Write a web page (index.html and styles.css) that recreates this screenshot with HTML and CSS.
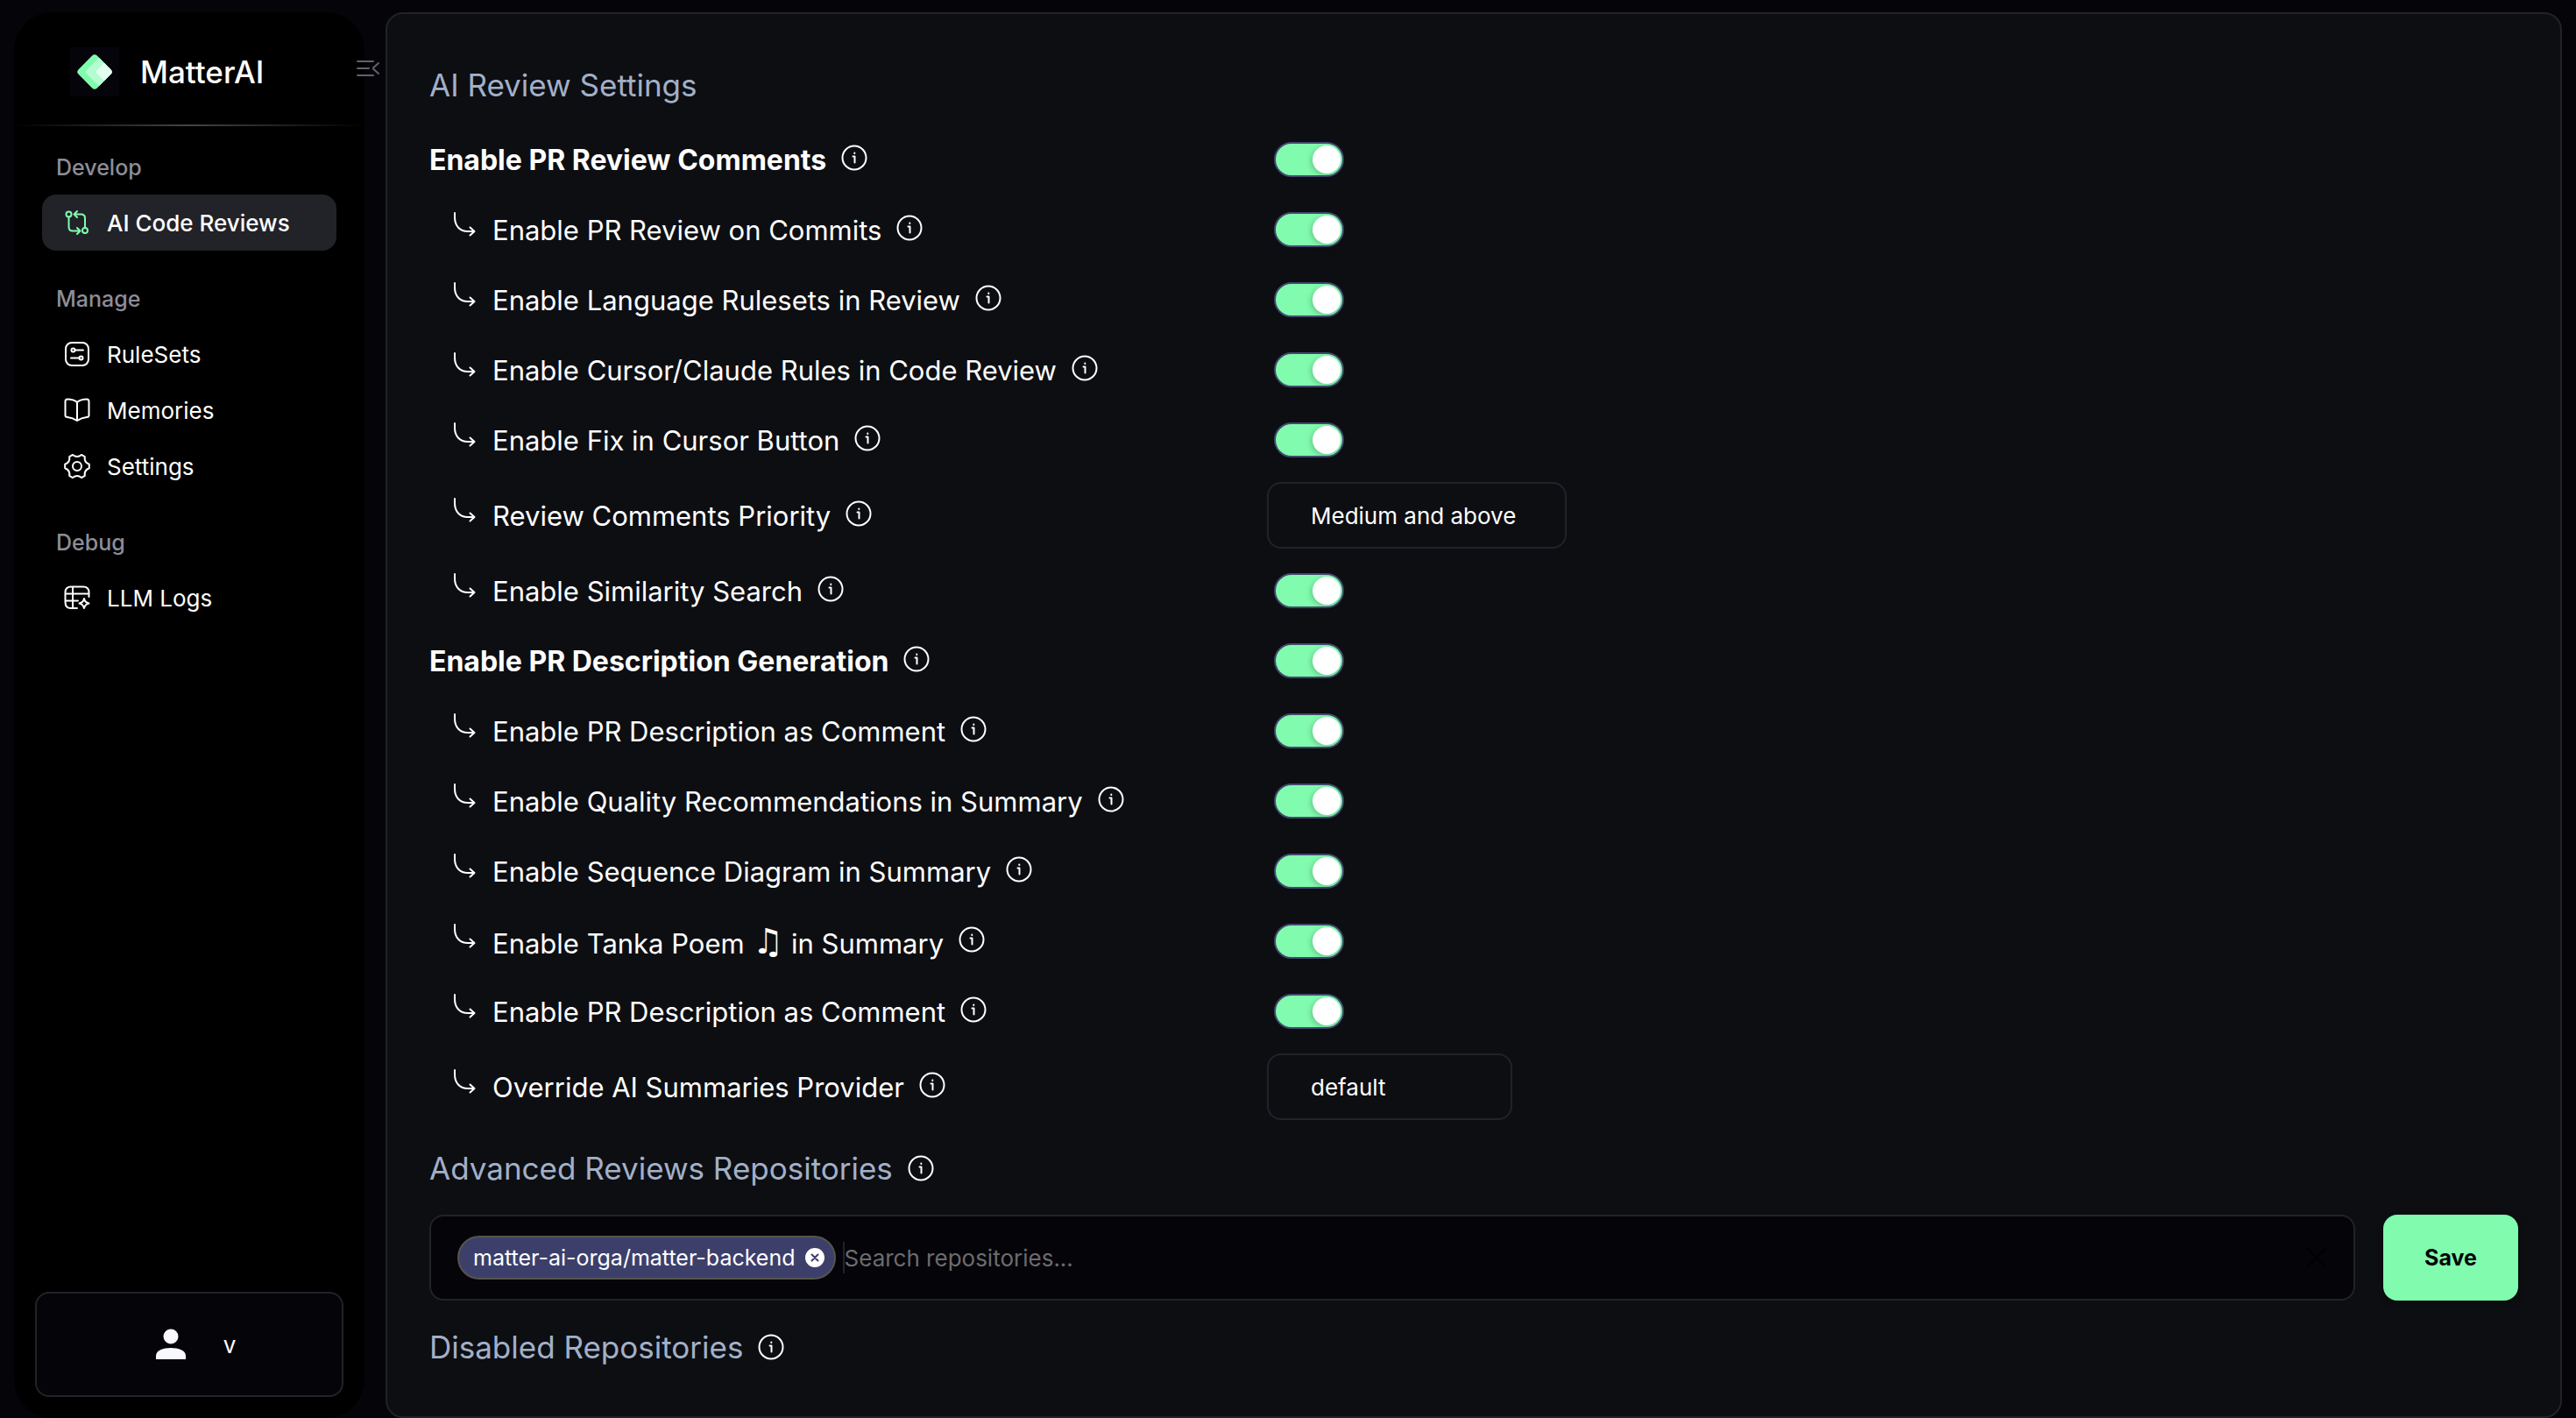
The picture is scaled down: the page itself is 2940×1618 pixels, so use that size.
FILE: index.html
```
<!DOCTYPE html>
<html lang="en">
<head>
	<meta charset="utf-8">
	<title>MatterAI - Settings</title>
	<link rel="stylesheet" href="styles.css">
</head>
<body>
	<!-- shared icons -->
	<svg class="sprite" aria-hidden="true">
		<symbol id="icon-info" viewBox="0 0 32 32">
			<circle cx="16" cy="16" r="13.500" />
			<path d="M14.500 14.500H16.500V21.500" />
			<path d="M16.300 10.500v.4" />
		</symbol>
		<symbol id="icon-arrow" viewBox="0 0 32 32">
			<path d="M5 3V8C5 18 11 24 20 24H27" />
			<path d="M22.500 19.500L27.500 24L22.500 28.500" />
		</symbol>
	</svg>

	<div class="layout">
		<aside class="sidebar">
			<div class="brand">
				<svg class="brand-logo" viewBox="0 0 56 56">
					<rect width="56" height="56" fill="#05040a" />
					<clipPath id="diamond"><rect x="13" y="13" width="30" height="30" rx="4" transform="rotate(45 28 28)" /></clipPath>
					<g clip-path="url(#diamond)">
						<rect width="56" height="56" fill="#81fcae" />
						<rect x="23" y="13" width="30" height="30" rx="2" transform="rotate(45 38 28)" fill="#b3fdd0" />
						<rect x="35" y="13" width="30" height="30" rx="2" transform="rotate(45 50 28)" fill="#e2fff0" />
					</g>
				</svg>
				<span class="brand-name">MatterAI</span>
				<button class="collapse" type="button" aria-label="Collapse sidebar">
					<svg class="collapse-icon" viewBox="0 0 28 20"><path d="M2 2H20M2 10H15M2 18H20M26 4L20.500 9Q19.500 10 20.500 11L26 16" /></svg>
				</button>
			</div>
			<hr class="divider">
			<nav class="nav">
				<div class="nav-group">
					<h2 class="nav-title">Develop</h2>
					<a class="nav-link active" href="#">
						<svg class="nav-icon" viewBox="0 0 32 32">
							<circle cx="6.500" cy="6.500" r="3" /><circle cx="25" cy="25" r="3" />
							<path d="M6.500 9.500V21C6.500 24 8 25.500 11 25.500H19M16 22L19.500 25.500L16 29M25 22V11C25 8 23.500 6.500 20.500 6.500H13M16 3L12.500 6.500L16 10" />
						</svg>
						AI Code Reviews
					</a>
				</div>
				<div class="nav-group">
					<h2 class="nav-title">Manage</h2>
					<a class="nav-link" href="#">
						<svg class="nav-icon" viewBox="0 0 32 32">
							<rect x="3" y="3" width="26" height="26" rx="7" />
							<circle cx="11.500" cy="11.500" r="2" /><circle cx="20.500" cy="20.500" r="2" />
							<path d="M13.500 11.500H23M9 20.500H18.500" />
						</svg>
						RuleSets
					</a>
					<a class="nav-link" href="#">
						<svg class="nav-icon" viewBox="0 0 32 32">
							<path d="M16 7V28M16 7C13 4.500 9 3.500 5 3.500Q2.500 3.500 2.500 6V22Q2.500 24 5 24C9 24.500 13 26 16 28C19 26 23 24.500 27 24Q29.500 24 29.500 22V6Q29.500 3.500 27 3.500C23 3.500 19 4.500 16 7" />
						</svg>
						Memories
					</a>
					<a class="nav-link" href="#">
						<svg class="nav-icon" viewBox="0 0 32 32">
							<circle cx="16" cy="16" r="5" />
							<path d="M29.800 13.800V18.200Q23.700 20.500 24.800 26.900L21 29.100Q16 24.900 11 29.100L7.200 26.900Q8.300 20.500 2.200 18.200V13.800Q8.300 11.500 7.200 5.100L11 2.900Q16 7.100 21 2.900L24.800 5.100Q23.700 11.500 29.800 13.800Z" />
						</svg>
						Settings
					</a>
				</div>
				<div class="nav-group">
					<h2 class="nav-title">Debug</h2>
					<a class="nav-link" href="#">
						<svg class="nav-icon" viewBox="0 0 32 32">
							<path d="M29.500 15V10Q29.500 3.500 23 3.500H9Q2.500 3.500 2.500 10V21Q2.500 28 9 28H16M11 3.500V28M2.500 11.500H29.500M2.500 19.500H17" />
							<path d="M24 17Q25 21.500 29.500 22.500Q25 23.500 24 28Q23 23.500 18.500 22.500Q23 21.500 24 17Z" />
						</svg>
						LLM Logs
					</a>
				</div>
			</nav>
			<button class="user" type="button">
				<svg class="user-icon" viewBox="0 0 36 36"><circle cx="18" cy="9" r="8.500" /><path d="M1 35V31C1 25 9 22 18 22S35 25 35 31V35Z" /></svg>
				<span>v</span>
			</button>
		</aside>

		<main class="panel">
			<h1 class="heading">AI Review Settings</h1>
			<div class="settings">
				<div class="row main">
					<div class="name">
						<label for="s1">Enable PR Review Comments</label>
						<svg class="info"><use href="#icon-info" /></svg>
					</div>
					<input class="toggle" type="checkbox" id="s1" checked>
				</div>
				<div class="row">
					<div class="name">
						<svg class="arrow"><use href="#icon-arrow" /></svg>
						<label for="s2">Enable PR Review on Commits</label>
						<svg class="info"><use href="#icon-info" /></svg>
					</div>
					<input class="toggle" type="checkbox" id="s2" checked>
				</div>
				<div class="row">
					<div class="name">
						<svg class="arrow"><use href="#icon-arrow" /></svg>
						<label for="s3">Enable Language Rulesets in Review</label>
						<svg class="info"><use href="#icon-info" /></svg>
					</div>
					<input class="toggle" type="checkbox" id="s3" checked>
				</div>
				<div class="row">
					<div class="name">
						<svg class="arrow"><use href="#icon-arrow" /></svg>
						<label for="s4">Enable Cursor/Claude Rules in Code Review</label>
						<svg class="info"><use href="#icon-info" /></svg>
					</div>
					<input class="toggle" type="checkbox" id="s4" checked>
				</div>
				<div class="row">
					<div class="name">
						<svg class="arrow"><use href="#icon-arrow" /></svg>
						<label for="s5">Enable Fix in Cursor Button</label>
						<svg class="info"><use href="#icon-info" /></svg>
					</div>
					<input class="toggle" type="checkbox" id="s5" checked>
				</div>
				<div class="row">
					<div class="name">
						<svg class="arrow"><use href="#icon-arrow" /></svg>
						<label for="s6">Review Comments Priority</label>
						<svg class="info"><use href="#icon-info" /></svg>
					</div>
					<select class="select" id="s6"><option>Medium and above</option></select>
				</div>
				<div class="row">
					<div class="name">
						<svg class="arrow"><use href="#icon-arrow" /></svg>
						<label for="s7">Enable Similarity Search</label>
						<svg class="info"><use href="#icon-info" /></svg>
					</div>
					<input class="toggle" type="checkbox" id="s7" checked>
				</div>
				<div class="row main">
					<div class="name">
						<label for="s8">Enable PR Description Generation</label>
						<svg class="info"><use href="#icon-info" /></svg>
					</div>
					<input class="toggle" type="checkbox" id="s8" checked>
				</div>
				<div class="row">
					<div class="name">
						<svg class="arrow"><use href="#icon-arrow" /></svg>
						<label for="s9">Enable PR Description as Comment</label>
						<svg class="info"><use href="#icon-info" /></svg>
					</div>
					<input class="toggle" type="checkbox" id="s9" checked>
				</div>
				<div class="row">
					<div class="name">
						<svg class="arrow"><use href="#icon-arrow" /></svg>
						<label for="s10">Enable Quality Recommendations in Summary</label>
						<svg class="info"><use href="#icon-info" /></svg>
					</div>
					<input class="toggle" type="checkbox" id="s10" checked>
				</div>
				<div class="row">
					<div class="name">
						<svg class="arrow"><use href="#icon-arrow" /></svg>
						<label for="s11">Enable Sequence Diagram in Summary</label>
						<svg class="info"><use href="#icon-info" /></svg>
					</div>
					<input class="toggle" type="checkbox" id="s11" checked>
				</div>
				<div class="row">
					<div class="name">
						<svg class="arrow"><use href="#icon-arrow" /></svg>
						<label for="s12">Enable Tanka Poem <span class="note">♫</span> in Summary</label>
						<svg class="info"><use href="#icon-info" /></svg>
					</div>
					<input class="toggle" type="checkbox" id="s12" checked>
				</div>
				<div class="row">
					<div class="name">
						<svg class="arrow"><use href="#icon-arrow" /></svg>
						<label for="s13">Enable PR Description as Comment</label>
						<svg class="info"><use href="#icon-info" /></svg>
					</div>
					<input class="toggle" type="checkbox" id="s13" checked>
				</div>
				<div class="row">
					<div class="name">
						<svg class="arrow"><use href="#icon-arrow" /></svg>
						<label for="s14">Override AI Summaries Provider</label>
						<svg class="info"><use href="#icon-info" /></svg>
					</div>
					<select class="select narrow" id="s14"><option>default</option></select>
				</div>
			</div>

			<h2 class="heading">
				<label for="repos">Advanced Reviews Repositories</label>
				<svg class="info"><use href="#icon-info" /></svg>
			</h2>
			<form class="repo-form">
				<div class="repo-box">
					<span class="chip">
						matter-ai-orga/matter-backend
						<button class="chip-remove" type="button" aria-label="Remove repository">
							<svg class="chip-icon" viewBox="0 0 24 24"><circle cx="12" cy="12" r="11" /><path d="M8.500 8.500L15.500 15.500M15.500 8.500L8.500 15.500" /></svg>
						</button>
					</span>
					<input class="repo-input" type="text" id="repos" placeholder="Search repositories...">
					<button class="clear" type="button" aria-label="Clear">
						<svg class="clear-icon" viewBox="0 0 24 24"><path d="M2 2L22 22M22 2L2 22" /></svg>
					</button>
				</div>
				<button class="save" type="button">Save</button>
			</form>
			<h2 class="heading">
				Disabled Repositories
				<svg class="info"><use href="#icon-info" /></svg>
			</h2>
		</main>
	</div>
</body>
</html>
```
FILE: styles.css
```
* {
	box-sizing: border-box;
}
body {
	margin: 0;
	background-color: #050409;
	color: #fff;
	font-family: Inter, "DejaVu Sans", sans-serif;
	font-size: 26px;
}
button, input, select {
	font: inherit;
	color: inherit;
}
button {
	padding: 0;
	border: none;
	background: none;
	cursor: pointer;
}
svg {
	display: block;
	flex-shrink: 0;
	fill: none;
	stroke: currentColor;
	stroke-width: 2;
	stroke-linecap: round;
	stroke-linejoin: round;
}
.sprite {
	display: none;
}
.layout {
	display: flex;
	gap: 24px;
	min-height: 100vh;
	padding: 14px 16px 0;
}

/* sidebar */
.sidebar {
	display: flex;
	flex-direction: column;
	flex: 0 0 400px;
	padding-bottom: 24px;
	background-color: #000;
	border-radius: 44px;
}
.brand {
	display: flex;
	align-items: center;
	height: 128px;
	padding: 8px 0 0 64px;
}
.brand-logo {
	width: 56px;
	height: 56px;
	stroke: none;
}
.brand-name {
	flex: 1;
	margin-left: 24px;
	font-size: 35px;
	font-weight: 500;
}
.collapse {
	margin: 0 -18px 8px 0;
	color: #62626c;
}
.collapse-icon {
	width: 28px;
	height: 20px;
}
.divider {
	width: 100%;
	height: 2px;
	margin: 0;
	border: none;
	background: linear-gradient(to right, transparent, #444, transparent);
}
.nav {
	flex: 1;
	padding: 0 32px;
}
.nav-group {
	margin-bottom: 8px;
}
.nav-title {
	margin: 0;
	padding: 22px 16px 6px;
	line-height: 50px;
	font-size: 25px;
	font-weight: 500;
	color: #8d8d99;
}
.nav-link {
	display: flex;
	align-items: center;
	gap: 18px;
	height: 64px;
	padding-left: 24px;
	border-radius: 16px;
	color: #fff;
	text-decoration: none;
}
.nav-link.active {
	background-color: #222229;
	font-weight: 500;
}
.nav-icon {
	width: 32px;
	height: 32px;
}
.active .nav-icon {
	color: #81fcae;
}
.user {
	display: flex;
	align-items: center;
	justify-content: center;
	gap: 42px;
	height: 120px;
	margin: 0 24px;
	padding-left: 14px;
	border: 2px solid #222229;
	border-radius: 16px;
	background-color: #050409;
}
.user-icon {
	width: 36px;
	height: 36px;
	fill: #f8f9fc;
	stroke: none;
}

/* main panel */
.panel {
	flex: 1;
	min-width: 0;
	padding: 48px 48px 44px;
	border: 2px solid #222229;
	border-radius: 20px;
	background-color: #0d0e12;
}
.heading {
	display: flex;
	align-items: center;
	gap: 16px;
	height: 66px;
	margin: 0;
	font-size: 35px;
	font-weight: 400;
	color: #a2b0c8;
}
.info {
	width: 32px;
	height: 32px;
	color: #fff;
}
.settings {
	padding: 12px 0 14px;
}
.row {
	display: grid;
	grid-template-columns: 2fr 3fr;
	column-gap: 4px;
	align-items: center;
	justify-items: start;
	min-height: 80px;
	padding: 8px 0;
}
.name {
	display: flex;
	align-items: center;
	gap: 16px;
	padding-left: 24px;
	font-size: 31px;
}
.main .name {
	padding-left: 0;
	font-size: 32px;
	font-weight: 700;
}
.name .info {
	margin-bottom: 4px;
}
.arrow {
	width: 32px;
	height: 32px;
	margin-bottom: 12px;
}
.note {
	font-size: 40px;
	line-height: 1;
}

.toggle {
	appearance: none;
	display: flex;
	justify-content: flex-end;
	width: 80px;
	height: 40px;
	margin: 0 8px;
	padding: 2px;
	border: 2px solid #42496f;
	border-radius: 20px;
	background-color: #81fcae;
	cursor: pointer;
}
.toggle::before {
	content: "";
	width: 32px;
	height: 32px;
	border-radius: 50%;
	background-color: #fff;
	box-shadow: -2px 2px 6px rgba(0, 0, 0, 0.2);
}
.toggle:not(:checked) {
	justify-content: flex-start;
	background-color: #222229;
}
.select {
	appearance: none;
	width: 342px;
	height: 76px;
	padding: 0 48px;
	border: 2px solid #222229;
	border-radius: 16px;
	background-color: #0d0e12;
}
.select.narrow {
	width: 280px;
}

.repo-form {
	display: flex;
	gap: 32px;
	margin: 20px 0;
}
.repo-box {
	display: flex;
	align-items: center;
	flex: 1;
	gap: 8px;
	height: 98px;
	padding: 0 30px;
	border: 2px solid #222229;
	border-radius: 16px;
	background-color: #050409;
}
.chip {
	display: flex;
	align-items: center;
	gap: 10px;
	height: 50px;
	padding: 0 10px 0 16px;
	border: 2px solid #55554f;
	border-radius: 25px;
	background-color: #3d3f6b;
	font-size: 25px;
}
.chip-icon {
	width: 24px;
	height: 24px;
	color: #3d3f6b;
}
.chip-icon circle {
	fill: #fff;
	stroke: none;
}
.repo-input {
	flex: 1;
	min-width: 0;
	height: 36px;
	padding: 0;
	border: none;
	border-left: 2px solid #222229;
	outline: none;
	background: none;
}
.repo-input::placeholder {
	color: #6c6c6c;
}
.clear {
	color: #000;
}
.clear-icon {
	width: 24px;
	height: 24px;
}
.save {
	width: 154px;
	border-radius: 16px;
	background-color: #81fcae;
	box-shadow: 0 4px 8px rgba(0, 0, 0, 0.2);
	color: #050409;
	font-size: 25px;
	font-weight: 700;
}
```
